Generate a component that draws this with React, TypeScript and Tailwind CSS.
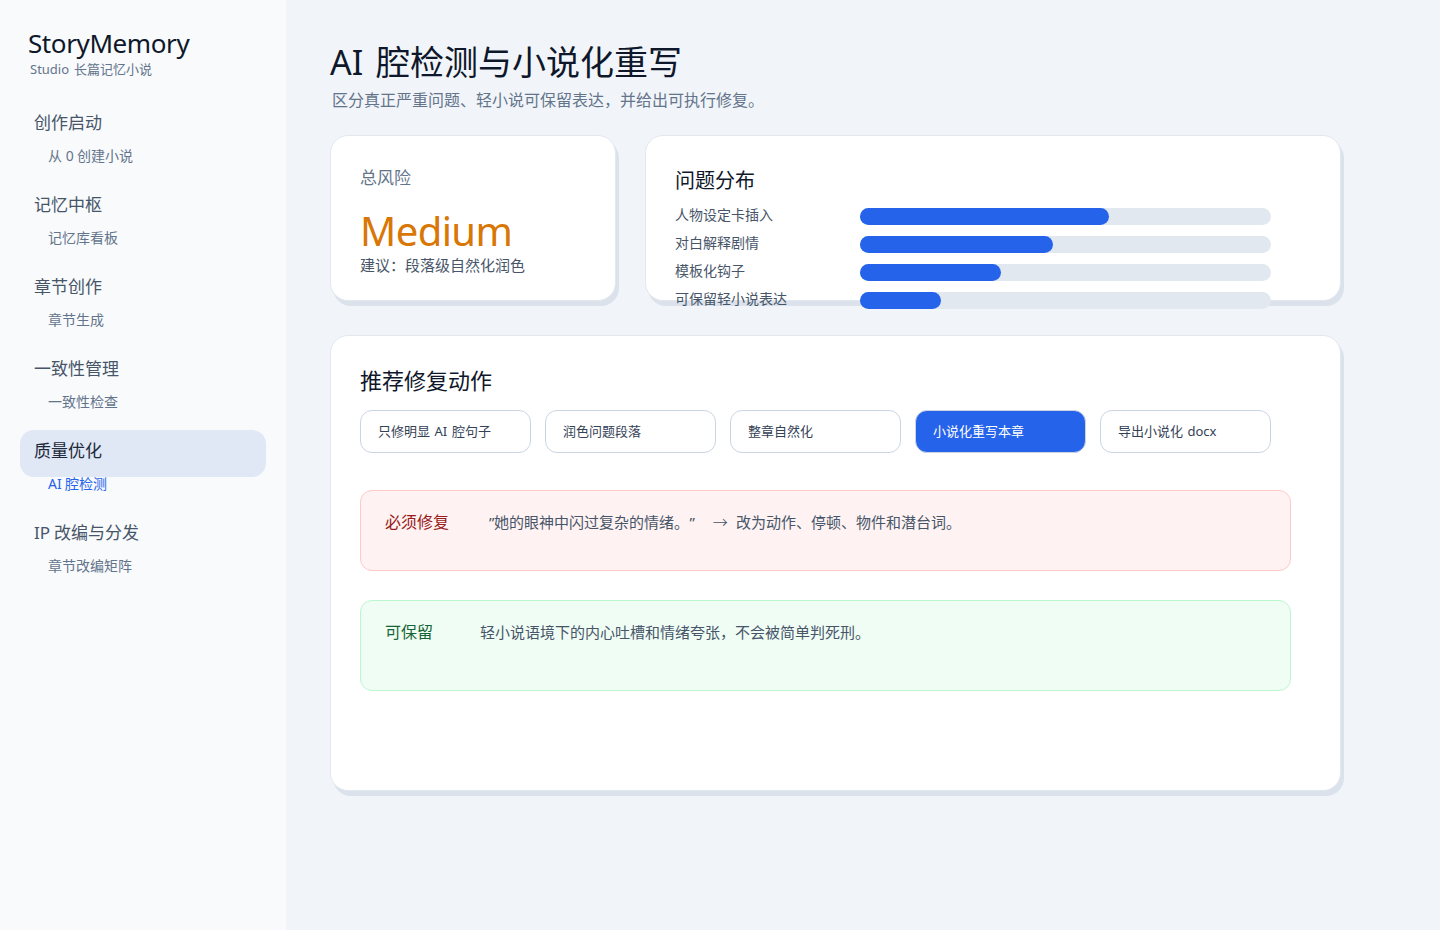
const font = { fontFamily: '"Noto Sans", sans-serif' };
const arrowFont = { fontFamily: '"Noto Sans CJK SC", sans-serif', fontWeight: 300 };

const navGroups = [
  { title: "创作启动", sub: "从 0 创建小说" },
  { title: "记忆中枢", sub: "记忆库看板" },
  { title: "章节创作", sub: "章节生成" },
  { title: "一致性管理", sub: "一致性检查" },
  { title: "质量优化", sub: "AI 腔检测", active: true },
  { title: "IP 改编与分发", sub: "章节改编矩阵" },
];

const bars = [
  { label: "人物设定卡插入", width: 249 },
  { label: "对白解释剧情", width: 193 },
  { label: "模板化钩子", width: 141 },
  { label: "可保留轻小说表达", width: 81 },
];

const actions = ["只修明显 AI 腔句子", "润色问题段落", "整章自然化", "小说化重写本章", "导出小说化 docx"];

function Sidebar() {
  return (
    <aside className="w-[286px] shrink-0 bg-[#f8fafc] px-[20px]">
      <div className="ml-[8px] pt-[25px] text-[26px] leading-[36px] tracking-[-0.4px] text-[#0f172a]">StoryMemory</div>
      <div className="ml-[10px] -mt-[1px] text-[13px] leading-[18px] text-[#64748b]">Studio 长篇记忆小说</div>
      <nav className="mt-[24px] [word-spacing:0]">
        {navGroups.map((g) => (
          <div key={g.title}>
            <div
              className={
                g.active
                  ? "h-[47px] rounded-[14px] bg-[#e0e8f5] px-[14px] pt-[9px] text-[17px] leading-[24px] text-[#1e293b]"
                  : "h-[47px] rounded-[14px] px-[14px] pt-[9px] text-[17px] leading-[24px] text-[#475569]"
              }
            >
              {g.title}
            </div>
            <div
              className={
                g.active
                  ? "h-[35px] pl-[28px] text-[14px] leading-[14px] text-[#2563eb]"
                  : "h-[35px] pl-[28px] text-[14px] leading-[14px] text-[#64748b]"
              }
            >
              {g.sub}
            </div>
          </div>
        ))}
      </nav>
    </aside>
  );
}

export default function App() {
  return (
    <div lang="zh-CN" className="flex h-[930px] overflow-hidden bg-[#f1f5f9] [word-spacing:0.07em] [text-spacing-trim:space-all]" style={font}>
      <Sidebar />
      <main className="w-[1011px] ml-[44px]">
        <h1 className="pt-[38px] text-[34px] leading-[48px] font-normal text-[#0f172a] [word-spacing:4px]">AI 腔检测与小说化重写</h1>
        <p className="ml-[2px] text-[16px] leading-[28px] text-[#64748b]">区分真正严重问题、轻小说可保留表达，并给出可执行修复。</p>

        <div className="mt-[21px] flex gap-[29px]">
          <section className="h-[166px] w-[286px] rounded-[18px] border border-[#e2e8f0] bg-white pl-[29px] shadow-[3px_5px_0_#dbe2ec]">
            <div className="pt-[30px] text-[17px] leading-[24px] text-[#64748b]">总风险</div>
            <div className="mt-[14px] text-[40px] leading-[54px] tracking-[-0.6px] text-[#d97706]">Medium</div>
            <div className="-mt-[3px] text-[15px] leading-[20px] text-[#475569]">建议：段落级自然化润色</div>
          </section>

          <section className="h-[166px] w-[696px] rounded-[18px] border border-[#e2e8f0] bg-white pl-[29px] shadow-[3px_5px_0_#dbe2ec]">
            <h2 className="pt-[31px] text-[20px] leading-[28px] font-normal text-[#0f172a]">问题分布</h2>
            <div className="mt-[13px] flex flex-col gap-[11px]">
              {bars.map((b) => (
                <div key={b.label} className="flex h-[17px] items-center">
                  <div className="w-[185px] -mt-[5px] text-[14px] text-[#475569]">{b.label}</div>
                  <div className="h-[17px] w-[411px] rounded-full bg-[#e2e8f0]">
                    <div className="h-[17px] rounded-full bg-[#2563eb]" style={{ width: b.width }} />
                  </div>
                </div>
              ))}
            </div>
          </section>
        </div>

        <section className="mt-[34px] h-[456px] w-[1011px] rounded-[18px] border border-[#e2e8f0] bg-white pl-[29px] shadow-[3px_5px_0_#dbe2ec]">
          <h2 className="pt-[29px] text-[22px] leading-[30px] font-normal text-[#0f172a]">推荐修复动作</h2>
          <div className="mt-[15px] flex gap-[14px]">
            {actions.map((a, i) => (
              <div
                key={a}
                className={
                  i === 3
                    ? "flex h-[43px] w-[171px] items-center rounded-[12px] border border-[#cbd5e1] bg-[#2563eb] pl-[17px] text-[13px] text-white"
                    : "flex h-[43px] w-[171px] items-center rounded-[12px] border border-[#cbd5e1] bg-white pl-[17px] text-[13px] text-[#334155]"
                }
              >
                {a}
              </div>
            ))}
          </div>
          <div className="mt-[37px] flex h-[81px] w-[931px] items-start rounded-[12px] border border-[#fecaca] bg-[#fef2f2] pl-[24px] pt-[20px] text-[15px] leading-[22px] text-[#475569]">
            <span className="w-[104px] text-[16px] text-[#991b1b]">必须修复</span>
            <span className="whitespace-pre">
              ”她的眼神中闪过复杂的情绪。”   <span className="mx-[3px]" style={arrowFont}>→</span> 改为动作、停顿、物件和潜台词。
            </span>
          </div>
          <div className="mt-[29px] flex h-[91px] w-[931px] items-start rounded-[12px] border border-[#bbf7d0] bg-[#f0fdf4] pl-[24px] pt-[20px] text-[15px] leading-[22px] text-[#475569]">
            <span className="w-[95px] text-[16px] text-[#166534]">可保留</span>
            <span>轻小说语境下的内心吐槽和情绪夸张，不会被简单判死刑。</span>
          </div>
        </section>
      </main>
    </div>
  );
}
